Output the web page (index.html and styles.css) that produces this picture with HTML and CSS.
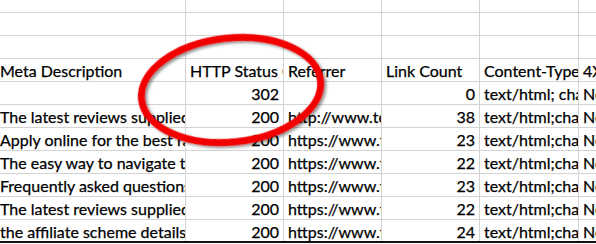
FILE: index.html
```html
<!DOCTYPE html>
<html>
<head>
<meta charset="utf-8">
<link rel="stylesheet" href="styles.css">
</head>
<body>
<div class="page">
  <div class="sheet">
    <div class="c"></div><div class="c"></div><div class="c"></div><div class="c"></div><div class="c"></div><div class="c"></div>
    <div class="c"></div><div class="c"></div><div class="c"></div><div class="c"></div><div class="c"></div><div class="c"></div>
    <div class="c"></div><div class="c"></div><div class="c"></div><div class="c"></div><div class="c"></div><div class="c"></div>

    <div class="c first">Meta Description</div><div class="c">HTTP Status Code</div><div class="c">Referrer</div><div class="c">Link Count</div><div class="c">Content-Type</div><div class="c">4XX Errors</div>

    <div class="c first"></div><div class="c num">302</div><div class="c"></div><div class="c num">0</div><div class="c">text/html; charset=UTF-8</div><div class="c">No</div>

    <div class="c first">The latest reviews supplied by</div><div class="c num">200</div><div class="c">http://www.test.com</div><div class="c num">38</div><div class="c">text/html;charset=UTF-8</div><div class="c">No</div>

    <div class="c first">Apply online for the best rates</div><div class="c num">200</div><div class="c">https://www.test.com</div><div class="c num">23</div><div class="c">text/html;charset=UTF-8</div><div class="c">No</div>

    <div class="c first">The easy way to navigate the site</div><div class="c num">200</div><div class="c">https://www.test.com</div><div class="c num">22</div><div class="c">text/html;charset=UTF-8</div><div class="c">No</div>

    <div class="c first">Frequently asked questions</div><div class="c num">200</div><div class="c">https://www.test.com</div><div class="c num">23</div><div class="c">text/html;charset=UTF-8</div><div class="c">No</div>

    <div class="c first">The latest reviews supplied by</div><div class="c num">200</div><div class="c">https://www.test.com</div><div class="c num">22</div><div class="c">text/html;charset=UTF-8</div><div class="c">No</div>

    <div class="c first">the affiliate scheme details</div><div class="c num">200</div><div class="c">https://www.test.com</div><div class="c num">24</div><div class="c">text/html;charset=UTF-8</div><div class="c">No</div>
  </div>
  <svg class="mark" width="596" height="244" viewBox="0 0 596 244">
    <defs>
      <filter id="sh" x="-20%" y="-20%" width="140%" height="140%">
        <feDropShadow dx="2" dy="2" stdDeviation="1.5" flood-color="#000" flood-opacity="0.45"/>
      </filter>
    </defs>
    <ellipse cx="231" cy="90" rx="90" ry="52" fill="none" stroke="#f20000" stroke-width="7" transform="rotate(-6 231 90)" filter="url(#sh)"/>
  </svg>
</div>
</body>
</html>
```
FILE: styles.css
```css
html, body {
  margin: 0;
  padding: 0;
  background: #fff;
}
.page {
  position: relative;
  width: 596px;
  height: 244px;
  overflow: hidden;
}
.sheet {
  display: grid;
  grid-template-columns: 185px 97px 97px 97px 98px 40px;
  grid-template-rows: 12px repeat(9, 22px) 21px;
  gap: 1px;
  background: #d3d3d3;
  border-bottom: 2px solid #111;
  width: 620px;
  font-family: Lato, "Open Sans", sans-serif;
  font-size: 16px;
  color: #000;
  -webkit-text-stroke: 0.25px #000;
}
.c {
  background: #fff;
  white-space: nowrap;
  overflow: hidden;
  padding: 0 4px;
  line-height: 23px;
}
.first {
  padding-left: 0;
}
.num {
  text-align: right;
  padding-right: 4px;
}
.mark {
  position: absolute;
  left: 0;
  top: 0;
  pointer-events: none;
}
```
